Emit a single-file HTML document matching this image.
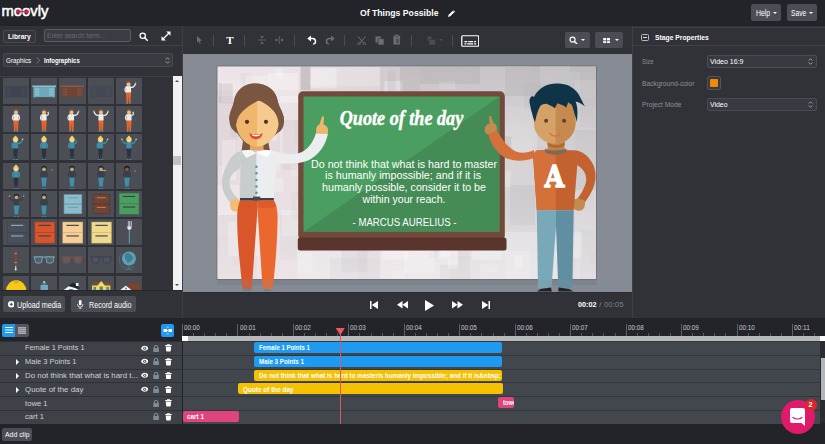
<!DOCTYPE html>
<html><head><meta charset="utf-8"><title>Moovly</title>
<style>
*{box-sizing:border-box;margin:0;padding:0}
html,body{width:825px;height:444px;overflow:hidden;background:#303238;font-family:"Liberation Sans",sans-serif;color:#fff}
.abs{position:absolute}
.t{position:absolute;white-space:nowrap;transform-origin:0 50%;line-height:1.2;display:block}
#top{left:0;top:0;width:825px;height:26px;background:#22242a}
#left{left:0;top:26px;width:183px;height:293px;background:#303238;border-right:1px solid #3d4046;overflow:hidden}
#toolbar{left:183px;top:26px;width:449px;height:28px;background:#303238}
#stagebg{left:183px;top:54px;width:449px;height:238px;background:#868b94;overflow:hidden}
#play{left:183px;top:292px;width:449px;height:27px;background:#303238}
#right{left:631.500px;top:26px;width:194px;height:293px;background:#303238;border-left:1px solid #3d4046}
#tl{left:0;top:318px;width:825px;height:126px;background:#22242a;overflow:hidden}
.row{left:0;width:182px;background:#3e4148;border-top:1px solid #2f3137}
.trk{left:183px;width:637px;background:#42464d;border-top:1px solid #34373d}
.clip{height:11px;border-radius:2px;overflow:hidden}
.sep{width:1px;height:11px;top:8.500px;background:#4a4d55}
.th{width:26px;height:26px;background:#4a4d54;overflow:hidden}
.btn{background:#4a4d54;border-radius:2px}
</style></head><body>
<div id="top" class="abs">
<svg class="abs" style="left:0;top:0" width="60" height="26" viewBox="0 0 60 26"><text x="1.500" y="15.600" font-family="'Liberation Sans',sans-serif" font-weight="normal" font-size="15.500" fill="#fff" stroke="#fff" stroke-width=".55" textLength="47" lengthAdjust="spacingAndGlyphs">moovly</text><path d="M18.800 11.600H27" stroke="#e6176a" stroke-width="1.300"/><circle cx="18.800" cy="11.600" r="1.900" fill="#e6176a"/><circle cx="27" cy="11.600" r="1.900" fill="#e6176a"/></svg>
<span class="t" style="left:360.00px;top:6.60px;font-size:9.50px;font-weight:bold;color:#fff;transform:scaleX(0.912);">Of Things Possible</span><svg class="abs" style="left:448px;top:9.800px" width="7" height="7" viewBox="0 0 16 16"><path d="M0 16l1.500-5L11 1.500l3.500 3.500L5 14.500z" fill="#fff"/><path d="M12 0.500l1-1 3.500 3.500-1 1z" fill="#fff" transform="translate(0 1)"/></svg>
<div class="abs btn" style="left:751.300px;top:4.200px;width:29.700px;height:16.600px;background:#4b4e56"></div><span class="t" style="left:755.80px;top:7.90px;font-size:8.50px;font-weight:normal;color:#fff;transform:scaleX(0.812);">Help</span><div class="abs" style="left:772.8px;top:11.8px;width:0;height:0;border-left:2px solid transparent;border-right:2px solid transparent;border-top:2.400px solid #fff"></div><div class="abs btn" style="left:786.800px;top:4.200px;width:30.300px;height:16.600px;background:#4b4e56"></div><span class="t" style="left:791.30px;top:7.90px;font-size:8.50px;font-weight:normal;color:#fff;transform:scaleX(0.785);">Save</span><div class="abs" style="left:809.3px;top:11.8px;width:0;height:0;border-left:2px solid transparent;border-right:2px solid transparent;border-top:2.400px solid #fff"></div></div>
<div id="left" class="abs">
<div class="abs" style="left:0;top:18.500px;width:182px;height:1px;background:#3d4046"></div><div class="abs" style="left:3.300px;top:3.600px;width:32.500px;height:13.500px;background:#34363c;border:1px solid #474a51;border-radius:2px"></div><span class="t" style="left:7.80px;top:5.60px;font-size:8.00px;font-weight:bold;color:#fff;transform:scaleX(0.837);">Library</span><div class="abs" style="left:44px;top:3px;width:86.500px;height:13px;background:#3a3c43;border:1px solid #5a5d65;border-radius:2px"></div><span class="t" style="left:46.80px;top:4.80px;font-size:8.00px;font-weight:normal;color:#696c74;transform:scaleX(0.826);">Enter search term...</span><svg class="abs" style="left:138.500px;top:6.300px" width="9" height="9" viewBox="0 0 18 18"><circle cx="7.500" cy="7.500" r="5.300" fill="none" stroke="#fff" stroke-width="2.600"/><path d="M11.500 11.500L16.500 16.500" stroke="#fff" stroke-width="3" stroke-linecap="round"/></svg><svg class="abs" style="left:160.500px;top:4.500px" width="10" height="10" viewBox="0 0 20 20"><path d="M4 16L16 4" stroke="#fff" stroke-width="2.400"/><path d="M10.500 1H19V9.500z" fill="#fff"/><path d="M9.500 19H1V10.500z" fill="#fff"/></svg><div class="abs" style="left:2.700px;top:27px;width:170.800px;height:13.500px;background:#393b42;border:1px solid #484b52;border-radius:2px"></div><span class="t" style="left:5.60px;top:29.60px;font-size:7.80px;font-weight:normal;color:#fff;transform:scaleX(0.808);">Graphics</span><svg class="abs" style="left:35.500px;top:30.500px" width="5" height="7" viewBox="0 0 5 7"><path d="M0.500 0.500L4 3.500L0.500 6.500" fill="none" stroke="#7a7d85" stroke-width=".8"/></svg><span class="t" style="left:43.50px;top:29.60px;font-size:7.80px;font-weight:bold;color:#fff;transform:scaleX(0.763);">Infographics</span><svg class="abs" style="left:164.500px;top:30.800px" width="5" height="7" viewBox="0 0 10 14"><path d="M1.500 5L5 1.500L8.500 5M1.500 9L5 12.500L8.500 9" fill="none" stroke="#b9bbc0" stroke-width="1.600"/></svg><div class="abs" style="left:0;top:49.500px;width:182px;height:1px;background:#3d4046"></div><div class="abs" style="left:0;top:50.500px;width:182px;height:213.700px;overflow:hidden"><svg class="abs" style="left:2.70px;top:1.30px;background:#4b4e55" width="26.400" height="26" viewBox="0 0 26.400 26"><rect x="1.300" y="7.500" width="23.800" height="1.600" fill="#434854"/><rect x="2.300" y="9.100" width="21.800" height="10" fill="#3f444f"/><rect x="3.800" y="10.600" width="4.500" height="1.800" fill="#454a56"/><rect x="3.800" y="13.200" width="4.500" height="1.800" fill="#454a56"/><rect x="3.800" y="15.800" width="4.500" height="1.800" fill="#454a56"/><rect x="18.100" y="10.600" width="4.500" height="1.800" fill="#454a56"/><rect x="18.100" y="13.200" width="4.500" height="1.800" fill="#454a56"/><rect x="18.100" y="15.800" width="4.500" height="1.800" fill="#454a56"/><rect x="3" y="18.600" width="1" height="1.200" fill="#3f444f"/><rect x="22.400" y="18.600" width="1" height="1.200" fill="#3f444f"/></svg>
<svg class="abs" style="left:31.05px;top:1.30px;background:#4b4e55" width="26.400" height="26" viewBox="0 0 26.400 26"><rect x="1.300" y="7.500" width="23.800" height="1.600" fill="#8cc3d3"/><rect x="2.300" y="9.100" width="21.800" height="10" fill="#6ea9bb"/><rect x="3.800" y="10.600" width="4.500" height="1.800" fill="#8cc3d3"/><rect x="3.800" y="13.200" width="4.500" height="1.800" fill="#8cc3d3"/><rect x="3.800" y="15.800" width="4.500" height="1.800" fill="#8cc3d3"/><rect x="18.100" y="10.600" width="4.500" height="1.800" fill="#8cc3d3"/><rect x="18.100" y="13.200" width="4.500" height="1.800" fill="#8cc3d3"/><rect x="18.100" y="15.800" width="4.500" height="1.800" fill="#8cc3d3"/><rect x="3" y="18.600" width="1" height="1.200" fill="#6ea9bb"/><rect x="22.400" y="18.600" width="1" height="1.200" fill="#6ea9bb"/></svg>
<svg class="abs" style="left:59.40px;top:1.30px;background:#4b4e55" width="26.400" height="26" viewBox="0 0 26.400 26"><rect x="1.300" y="7.500" width="23.800" height="1.600" fill="#8a5a46"/><rect x="2.300" y="9.100" width="21.800" height="10" fill="#6e4436"/><rect x="3.800" y="10.600" width="4.500" height="1.800" fill="#80503f"/><rect x="3.800" y="13.200" width="4.500" height="1.800" fill="#80503f"/><rect x="3.800" y="15.800" width="4.500" height="1.800" fill="#80503f"/><rect x="18.100" y="10.600" width="4.500" height="1.800" fill="#80503f"/><rect x="18.100" y="13.200" width="4.500" height="1.800" fill="#80503f"/><rect x="18.100" y="15.800" width="4.500" height="1.800" fill="#80503f"/><rect x="3" y="18.600" width="1" height="1.200" fill="#6e4436"/><rect x="22.400" y="18.600" width="1" height="1.200" fill="#6e4436"/></svg>
<svg class="abs" style="left:87.75px;top:1.30px;background:#4b4e55" width="26.400" height="26" viewBox="0 0 26.400 26"><rect x="1.300" y="7.500" width="23.800" height="1.600" fill="#474c57"/><rect x="2.300" y="9.100" width="21.800" height="10" fill="#434852"/><rect x="3.800" y="10.600" width="4.500" height="1.800" fill="#494e59"/><rect x="3.800" y="13.200" width="4.500" height="1.800" fill="#494e59"/><rect x="3.800" y="15.800" width="4.500" height="1.800" fill="#494e59"/><rect x="18.100" y="10.600" width="4.500" height="1.800" fill="#494e59"/><rect x="18.100" y="13.200" width="4.500" height="1.800" fill="#494e59"/><rect x="18.100" y="15.800" width="4.500" height="1.800" fill="#494e59"/><rect x="3" y="18.600" width="1" height="1.200" fill="#434852"/><rect x="22.400" y="18.600" width="1" height="1.200" fill="#434852"/></svg>
<svg class="abs" style="left:116.10px;top:1.30px;background:#4b4e55" width="26.400" height="26" viewBox="0 0 26.400 26"><path d="M9.9 14.1h5.200l-.6 11h-1.600l-.4-8-.4 8h-1.600z" fill="#e9652d"/><rect x="10.2" y="25.1" width="1.800" height=".9" fill="#3b8ea5"/><rect x="13.0" y="25.1" width="1.800" height=".9" fill="#3b8ea5"/><rect x="9.9" y="8.1" width="5.200" height="6.300" rx="1" fill="#e9ebec"/><path d="M10.1 8.8q-2.2 3 0 5.500" stroke="#e9ebec" stroke-width="1.200" fill="none"/><path d="M14.9 9.3q3.0 1 4.6 -3.500" stroke="#e9ebec" stroke-width="1.200" fill="none"/><circle cx="19.6" cy="5.2" r=".8" fill="#f4c07e"/><circle cx="12.5" cy="5.5" r="2.700" fill="#7a5540"/><circle cx="12.5" cy="6.3" r="1.900" fill="#f4c07e"/></svg>
<svg class="abs" style="left:2.70px;top:29.58px;background:#4b4e55" width="26.400" height="26" viewBox="0 0 26.400 26"><path d="M10.4 14.1h5.200l-.6 11h-1.600l-.4-8-.4 8h-1.600z" fill="#e9652d"/><rect x="10.7" y="25.1" width="1.800" height=".9" fill="#3b8ea5"/><rect x="13.5" y="25.1" width="1.800" height=".9" fill="#3b8ea5"/><rect x="10.4" y="8.1" width="5.200" height="6.300" rx="1" fill="#e9ebec"/><path d="M10.6 8.8q-2.2 3 0 5.500" stroke="#e9ebec" stroke-width="1.200" fill="none"/><path d="M15.4 8.8q2.2 3 0 5.500" stroke="#e9ebec" stroke-width="1.200" fill="none"/><circle cx="13.0" cy="5.5" r="2.700" fill="#7a5540"/><circle cx="13.0" cy="6.3" r="1.900" fill="#f4c07e"/></svg>
<svg class="abs" style="left:31.05px;top:29.58px;background:#4b4e55" width="26.400" height="26" viewBox="0 0 26.400 26"><path d="M10.4 14.1h5.200l-.6 11h-1.600l-.4-8-.4 8h-1.600z" fill="#e9652d"/><rect x="10.7" y="25.1" width="1.800" height=".9" fill="#3b8ea5"/><rect x="13.5" y="25.1" width="1.800" height=".9" fill="#3b8ea5"/><rect x="10.4" y="8.1" width="5.200" height="6.300" rx="1" fill="#e9ebec"/><path d="M10.6 8.8q-2.2 3 0 5.500" stroke="#e9ebec" stroke-width="1.200" fill="none"/><path d="M15.4 9.3q3 0 1.500 -3.500" stroke="#e9ebec" stroke-width="1.200" fill="none"/><circle cx="13.0" cy="5.5" r="2.700" fill="#7a5540"/><circle cx="13.0" cy="6.3" r="1.900" fill="#f4c07e"/></svg>
<svg class="abs" style="left:59.40px;top:29.58px;background:#4b4e55" width="26.400" height="26" viewBox="0 0 26.400 26"><path d="M9.9 14.1h5.200l-.6 11h-1.600l-.4-8-.4 8h-1.600z" fill="#e9652d"/><rect x="10.2" y="25.1" width="1.800" height=".9" fill="#3b8ea5"/><rect x="13.0" y="25.1" width="1.800" height=".9" fill="#3b8ea5"/><rect x="9.9" y="8.1" width="5.200" height="6.300" rx="1" fill="#e9ebec"/><path d="M10.1 8.8q-2.2 3 0 5.500" stroke="#e9ebec" stroke-width="1.200" fill="none"/><path d="M14.9 9.3q3.0 1 4.6 -3.500" stroke="#e9ebec" stroke-width="1.200" fill="none"/><circle cx="19.6" cy="5.2" r=".8" fill="#f4c07e"/><circle cx="12.5" cy="5.5" r="2.700" fill="#7a5540"/><circle cx="12.5" cy="6.3" r="1.900" fill="#f4c07e"/></svg>
<svg class="abs" style="left:87.75px;top:29.58px;background:#4b4e55" width="26.400" height="26" viewBox="0 0 26.400 26"><path d="M10.4 14.1h5.200l-.6 11h-1.600l-.4-8-.4 8h-1.600z" fill="#e9652d"/><rect x="10.7" y="25.1" width="1.800" height=".9" fill="#3b8ea5"/><rect x="13.5" y="25.1" width="1.800" height=".9" fill="#3b8ea5"/><rect x="10.4" y="8.1" width="5.200" height="6.300" rx="1" fill="#e9ebec"/><path d="M10.6 9.3q-3.0 1 -4.6 -3.500" stroke="#e9ebec" stroke-width="1.200" fill="none"/><circle cx="5.9" cy="5.2" r=".8" fill="#f4c07e"/><path d="M15.4 9.3q3.0 1 4.6 -3.500" stroke="#e9ebec" stroke-width="1.200" fill="none"/><circle cx="20.1" cy="5.2" r=".8" fill="#f4c07e"/><circle cx="13.0" cy="5.5" r="2.700" fill="#7a5540"/><circle cx="13.0" cy="6.3" r="1.900" fill="#f4c07e"/></svg>
<svg class="abs" style="left:116.10px;top:29.58px;background:#4b4e55" width="26.400" height="26" viewBox="0 0 26.400 26"><path d="M10.4 14.1h5.200l-.6 11h-1.600l-.4-8-.4 8h-1.600z" fill="#e9652d"/><rect x="10.7" y="25.1" width="1.800" height=".9" fill="#3b8ea5"/><rect x="13.5" y="25.1" width="1.800" height=".9" fill="#3b8ea5"/><rect x="10.4" y="8.1" width="5.200" height="6.300" rx="1" fill="#e9ebec"/><path d="M10.6 8.8q-2.2 3 0 5.500" stroke="#e9ebec" stroke-width="1.200" fill="none"/><path d="M15.4 9.3q3 0 1.500 -3.500" stroke="#e9ebec" stroke-width="1.200" fill="none"/><circle cx="13.0" cy="5.5" r="2.700" fill="#7a5540"/><circle cx="13.0" cy="6.3" r="1.900" fill="#f4c07e"/></svg>
<svg class="abs" style="left:2.70px;top:57.86px;background:#4b4e55" width="26.400" height="26" viewBox="0 0 26.400 26"><path d="M10.1 14.1h4.800l-.7 8.500h-3.400z" fill="#2c3340"/><rect x="11.0" y="21.3" width="1.100" height="3.500" fill="#2c3340"/><rect x="12.9" y="21.3" width="1.100" height="3.500" fill="#2c3340"/><rect x="10.2" y="25.1" width="1.800" height=".9" fill="#3b8ea5"/><rect x="13.0" y="25.1" width="1.800" height=".9" fill="#3b8ea5"/><rect x="9.9" y="8.1" width="5.200" height="6.300" rx="1" fill="#3f8fa8"/><path d="M10.1 8.8q-2.2 3 0 5.500" stroke="#3f8fa8" stroke-width="1.200" fill="none"/><path d="M14.9 9.3q3.0 1 4.6 -3.500" stroke="#3f8fa8" stroke-width="1.200" fill="none"/><circle cx="19.6" cy="5.2" r=".8" fill="#f2d3a8"/><circle cx="12.5" cy="5.5" r="2.700" fill="#f2d24b"/><circle cx="12.5" cy="6.3" r="1.900" fill="#f2d3a8"/><circle cx="12.5" cy="2.8" r="1.100" fill="#f2d24b"/></svg>
<svg class="abs" style="left:31.05px;top:57.86px;background:#4b4e55" width="26.400" height="26" viewBox="0 0 26.400 26"><path d="M10.6 14.1h4.800l-.7 8.500h-3.400z" fill="#2c3340"/><rect x="11.5" y="21.3" width="1.100" height="3.500" fill="#2c3340"/><rect x="13.4" y="21.3" width="1.100" height="3.500" fill="#2c3340"/><rect x="10.7" y="25.1" width="1.800" height=".9" fill="#3b8ea5"/><rect x="13.5" y="25.1" width="1.800" height=".9" fill="#3b8ea5"/><rect x="10.4" y="8.1" width="5.200" height="6.300" rx="1" fill="#3f8fa8"/><path d="M10.6 8.8q-2.2 3 0 5.500" stroke="#3f8fa8" stroke-width="1.200" fill="none"/><path d="M15.4 8.8q2.2 3 0 5.500" stroke="#3f8fa8" stroke-width="1.200" fill="none"/><circle cx="13.0" cy="5.5" r="2.700" fill="#f2d24b"/><circle cx="13.0" cy="6.3" r="1.900" fill="#f2d3a8"/><circle cx="13.0" cy="2.8" r="1.100" fill="#f2d24b"/></svg>
<svg class="abs" style="left:59.40px;top:57.86px;background:#4b4e55" width="26.400" height="26" viewBox="0 0 26.400 26"><path d="M10.6 14.1h4.800l-.7 8.500h-3.400z" fill="#2c3340"/><rect x="11.5" y="21.3" width="1.100" height="3.500" fill="#2c3340"/><rect x="13.4" y="21.3" width="1.100" height="3.500" fill="#2c3340"/><rect x="10.7" y="25.1" width="1.800" height=".9" fill="#3b8ea5"/><rect x="13.5" y="25.1" width="1.800" height=".9" fill="#3b8ea5"/><rect x="10.4" y="8.1" width="5.200" height="6.300" rx="1" fill="#3f8fa8"/><path d="M10.6 8.8q-2.2 3 0 5.500" stroke="#3f8fa8" stroke-width="1.200" fill="none"/><path d="M15.4 9.3q3 0 1.500 -3.500" stroke="#3f8fa8" stroke-width="1.200" fill="none"/><circle cx="13.0" cy="5.5" r="2.700" fill="#f2d24b"/><circle cx="13.0" cy="6.3" r="1.900" fill="#f2d3a8"/><circle cx="13.0" cy="2.8" r="1.100" fill="#f2d24b"/></svg>
<svg class="abs" style="left:87.75px;top:57.86px;background:#4b4e55" width="26.400" height="26" viewBox="0 0 26.400 26"><path d="M10.1 14.1h4.800l-.7 8.500h-3.400z" fill="#2c3340"/><rect x="11.0" y="21.3" width="1.100" height="3.500" fill="#2c3340"/><rect x="12.9" y="21.3" width="1.100" height="3.500" fill="#2c3340"/><rect x="10.2" y="25.1" width="1.800" height=".9" fill="#3b8ea5"/><rect x="13.0" y="25.1" width="1.800" height=".9" fill="#3b8ea5"/><rect x="9.9" y="8.1" width="5.200" height="6.300" rx="1" fill="#3f8fa8"/><path d="M10.1 8.8q-2.2 3 0 5.500" stroke="#3f8fa8" stroke-width="1.200" fill="none"/><path d="M14.9 9.3q3.0 1 4.6 -3.500" stroke="#3f8fa8" stroke-width="1.200" fill="none"/><circle cx="19.6" cy="5.2" r=".8" fill="#f2d3a8"/><circle cx="12.5" cy="5.5" r="2.700" fill="#f2d24b"/><circle cx="12.5" cy="6.3" r="1.900" fill="#f2d3a8"/><circle cx="12.5" cy="2.8" r="1.100" fill="#f2d24b"/></svg>
<svg class="abs" style="left:116.10px;top:57.86px;background:#4b4e55" width="26.400" height="26" viewBox="0 0 26.400 26"><path d="M10.6 14.1h4.800l-.7 8.500h-3.400z" fill="#2c3340"/><rect x="11.5" y="21.3" width="1.100" height="3.500" fill="#2c3340"/><rect x="13.4" y="21.3" width="1.100" height="3.500" fill="#2c3340"/><rect x="10.7" y="25.1" width="1.800" height=".9" fill="#3b8ea5"/><rect x="13.5" y="25.1" width="1.800" height=".9" fill="#3b8ea5"/><rect x="10.4" y="8.1" width="5.200" height="6.300" rx="1" fill="#3f8fa8"/><path d="M10.6 9.3q-3.0 1 -4.6 -3.500" stroke="#3f8fa8" stroke-width="1.200" fill="none"/><circle cx="5.9" cy="5.2" r=".8" fill="#f2d3a8"/><path d="M15.4 9.3q3.0 1 4.6 -3.500" stroke="#3f8fa8" stroke-width="1.200" fill="none"/><circle cx="20.1" cy="5.2" r=".8" fill="#f2d3a8"/><circle cx="13.0" cy="5.5" r="2.700" fill="#f2d24b"/><circle cx="13.0" cy="6.3" r="1.900" fill="#f2d3a8"/><circle cx="13.0" cy="2.8" r="1.100" fill="#f2d24b"/></svg>
<svg class="abs" style="left:2.70px;top:86.14px;background:#4b4e55" width="26.400" height="26" viewBox="0 0 26.400 26"><path d="M10.6 14.1h4.800l-.7 8.500h-3.400z" fill="#2c3340"/><rect x="11.5" y="21.3" width="1.100" height="3.500" fill="#2c3340"/><rect x="13.4" y="21.3" width="1.100" height="3.500" fill="#2c3340"/><rect x="10.7" y="25.1" width="1.800" height=".9" fill="#3b8ea5"/><rect x="13.5" y="25.1" width="1.800" height=".9" fill="#3b8ea5"/><rect x="10.4" y="8.1" width="5.200" height="6.300" rx="1" fill="#3f8fa8"/><path d="M10.6 8.8q-2.2 3 0 5.500" stroke="#3f8fa8" stroke-width="1.200" fill="none"/><path d="M15.4 8.8q2.2 3 0 5.500" stroke="#3f8fa8" stroke-width="1.200" fill="none"/><circle cx="13.0" cy="5.5" r="2.700" fill="#f2d24b"/><circle cx="13.0" cy="6.3" r="1.900" fill="#f2d3a8"/><circle cx="13.0" cy="2.8" r="1.100" fill="#f2d24b"/></svg>
<svg class="abs" style="left:31.05px;top:86.14px;background:#4b4e55" width="26.400" height="26" viewBox="0 0 26.400 26"><path d="M10.2 14.1h5.600l-1.100 9.500h-3.400z" fill="#3f8fa8"/><rect x="10.7" y="25.1" width="1.800" height=".9" fill="#3b8ea5"/><rect x="13.5" y="25.1" width="1.800" height=".9" fill="#3b8ea5"/><rect x="10.4" y="8.1" width="5.200" height="6.300" rx="1" fill="#3a3f4c"/><path d="M10.6 8.8q-2.2 3 0 5.500" stroke="#3a3f4c" stroke-width="1.200" fill="none"/><path d="M15.4 8.8q2.2 3 0 5.500" stroke="#3a3f4c" stroke-width="1.200" fill="none"/><circle cx="13.0" cy="5.5" r="2.700" fill="#12303f"/><circle cx="13.0" cy="6.3" r="1.900" fill="#d9a066"/><circle cx="21" cy="7" r=".8" fill="#c98a55"/></svg>
<svg class="abs" style="left:59.40px;top:86.14px;background:#4b4e55" width="26.400" height="26" viewBox="0 0 26.400 26"><path d="M10.2 14.1h5.600l-1.100 9.500h-3.400z" fill="#3f8fa8"/><rect x="10.7" y="25.1" width="1.800" height=".9" fill="#3b8ea5"/><rect x="13.5" y="25.1" width="1.800" height=".9" fill="#3b8ea5"/><rect x="10.4" y="8.1" width="5.200" height="6.300" rx="1" fill="#3a3f4c"/><path d="M10.6 8.8q-2.2 3 0 5.500" stroke="#3a3f4c" stroke-width="1.200" fill="none"/><path d="M15.4 8.8q2.2 3 0 5.500" stroke="#3a3f4c" stroke-width="1.200" fill="none"/><circle cx="13.0" cy="5.5" r="2.700" fill="#12303f"/><circle cx="13.0" cy="6.3" r="1.900" fill="#d9a066"/></svg>
<svg class="abs" style="left:87.75px;top:86.14px;background:#4b4e55" width="26.400" height="26" viewBox="0 0 26.400 26"><path d="M10.2 14.1h5.600l-1.100 9.500h-3.400z" fill="#3f8fa8"/><rect x="10.7" y="25.1" width="1.800" height=".9" fill="#3b8ea5"/><rect x="13.5" y="25.1" width="1.800" height=".9" fill="#3b8ea5"/><rect x="10.4" y="8.1" width="5.200" height="6.300" rx="1" fill="#3a3f4c"/><path d="M10.6 8.8q-2.2 3 0 5.500" stroke="#3a3f4c" stroke-width="1.200" fill="none"/><path d="M15.4 8.8q2.2 3 0 5.500" stroke="#3a3f4c" stroke-width="1.200" fill="none"/><circle cx="13.0" cy="5.5" r="2.700" fill="#12303f"/><circle cx="13.0" cy="6.3" r="1.900" fill="#d9a066"/><path d="M14 7.500h4" stroke="#d9a066" stroke-width="1"/></svg>
<svg class="abs" style="left:116.10px;top:86.14px;background:#4b4e55" width="26.400" height="26" viewBox="0 0 26.400 26"><path d="M8.2 14.1h5.600l-1.100 9.500h-3.400z" fill="#3f8fa8"/><rect x="8.7" y="25.1" width="1.800" height=".9" fill="#3b8ea5"/><rect x="11.5" y="25.1" width="1.800" height=".9" fill="#3b8ea5"/><rect x="8.4" y="8.1" width="5.200" height="6.300" rx="1" fill="#3a3f4c"/><path d="M8.6 8.8q-2.2 3 0 5.500" stroke="#3a3f4c" stroke-width="1.200" fill="none"/><path d="M13.4 8.8q2.2 3 0 5.500" stroke="#3a3f4c" stroke-width="1.200" fill="none"/><circle cx="11.0" cy="5.5" r="2.700" fill="#1c1a1c"/><circle cx="11.0" cy="6.3" r="1.900" fill="#8a5a3c"/><circle cx="19" cy="8" r=".8" fill="#c98a55"/></svg>
<svg class="abs" style="left:2.70px;top:114.42px;background:#4b4e55" width="26.400" height="26" viewBox="0 0 26.400 26"><path d="M10.7 14.1h5.600l-1.100 9.500h-3.400z" fill="#3f8fa8"/><rect x="11.2" y="25.1" width="1.800" height=".9" fill="#3b8ea5"/><rect x="14.0" y="25.1" width="1.800" height=".9" fill="#3b8ea5"/><rect x="10.9" y="8.1" width="5.200" height="6.300" rx="1" fill="#3a3f4c"/><path d="M11.1 9.3q-3.0 1 -4.6 -3.500" stroke="#3a3f4c" stroke-width="1.200" fill="none"/><circle cx="6.4" cy="5.2" r=".8" fill="#d9a066"/><path d="M15.9 9.3q3.0 1 4.6 -3.500" stroke="#3a3f4c" stroke-width="1.200" fill="none"/><circle cx="20.6" cy="5.2" r=".8" fill="#d9a066"/><circle cx="13.5" cy="5.5" r="2.700" fill="#12303f"/><circle cx="13.5" cy="6.3" r="1.900" fill="#d9a066"/></svg>
<svg class="abs" style="left:31.05px;top:114.42px;background:#4b4e55" width="26.400" height="26" viewBox="0 0 26.400 26"><path d="M10.2 14.1h5.600l-1.100 9.500h-3.400z" fill="#3f8fa8"/><rect x="10.7" y="25.1" width="1.800" height=".9" fill="#3b8ea5"/><rect x="13.5" y="25.1" width="1.800" height=".9" fill="#3b8ea5"/><rect x="10.4" y="8.1" width="5.200" height="6.300" rx="1" fill="#3a3f4c"/><path d="M10.6 8.8q-2.2 3 0 5.500" stroke="#3a3f4c" stroke-width="1.200" fill="none"/><path d="M15.4 8.8q2.2 3 0 5.500" stroke="#3a3f4c" stroke-width="1.200" fill="none"/><circle cx="13.0" cy="5.5" r="2.700" fill="#12303f"/><circle cx="13.0" cy="6.3" r="1.900" fill="#d9a066"/></svg>
<svg class="abs" style="left:59.40px;top:114.42px;background:#4b4e55" width="26.400" height="26" viewBox="0 0 26.400 26"><rect x="4.7" y="3.2" width="18.4" height="19.8" fill="#5f92a4"/><rect x="5.3" y="3.8" width="17.2" height="8.9" fill="#8dbccb"/><rect x="5.3" y="13.5" width="17.2" height="8.9" fill="#8dbccb"/><rect x="8.7" y="6.2" width="10.4" height="1.100" fill="#6fa3b5"/><rect x="8.7" y="15.9" width="10.4" height="1.100" fill="#6fa3b5"/></svg>
<svg class="abs" style="left:87.75px;top:114.42px;background:#4b4e55" width="26.400" height="26" viewBox="0 0 26.400 26"><rect x="4.8" y="3.2" width="17.0" height="19.8" fill="#55332a"/><rect x="5.4" y="3.8" width="15.8" height="8.9" fill="#6e4436"/><rect x="5.4" y="13.5" width="15.8" height="8.9" fill="#6e4436"/><rect x="8.8" y="6.2" width="9.0" height="1.100" fill="#e0702e"/><rect x="8.8" y="15.9" width="9.0" height="1.100" fill="#e0702e"/></svg>
<svg class="abs" style="left:116.10px;top:114.42px;background:#4b4e55" width="26.400" height="26" viewBox="0 0 26.400 26"><rect x="3.0" y="1.9" width="20.2" height="21.6" fill="#3a7f4c"/><rect x="3.6" y="2.5" width="19.0" height="9.8" fill="#4a9e5f"/><rect x="3.6" y="13.1" width="19.0" height="9.8" fill="#4a9e5f"/><rect x="7.0" y="4.9" width="12.2" height="1.100" fill="#3a3f4c"/><rect x="7.0" y="15.5" width="12.2" height="1.100" fill="#3a3f4c"/></svg>
<svg class="abs" style="left:2.70px;top:142.70px;background:#4b4e55" width="26.400" height="26" viewBox="0 0 26.400 26"><rect x="4.0" y="2.8" width="20.3" height="21.6" fill="#3c414c"/><rect x="4.6" y="3.4" width="19.1" height="9.8" fill="#4a4f5b"/><rect x="4.6" y="14.0" width="19.1" height="9.8" fill="#4a4f5b"/><rect x="8.0" y="5.8" width="12.3" height="1.100" fill="#7fb6c6"/><rect x="8.0" y="16.4" width="12.3" height="1.100" fill="#7fb6c6"/></svg>
<svg class="abs" style="left:31.05px;top:142.70px;background:#4b4e55" width="26.400" height="26" viewBox="0 0 26.400 26"><rect x="3.6" y="2.8" width="20.3" height="21.6" fill="#b64220"/><rect x="4.2" y="3.4" width="19.1" height="9.8" fill="#d9552b"/><rect x="4.2" y="14.0" width="19.1" height="9.8" fill="#d9552b"/><rect x="7.6" y="5.8" width="12.3" height="1.100" fill="#3a3f4c"/><rect x="7.6" y="16.4" width="12.3" height="1.100" fill="#3a3f4c"/></svg>
<svg class="abs" style="left:59.40px;top:142.70px;background:#4b4e55" width="26.400" height="26" viewBox="0 0 26.400 26"><rect x="3.4" y="2.8" width="20.5" height="21.6" fill="#dcae6e"/><rect x="4.0" y="3.4" width="19.3" height="9.8" fill="#f5cf96"/><rect x="4.0" y="14.0" width="19.3" height="9.8" fill="#f5cf96"/><rect x="7.4" y="5.8" width="12.5" height="1.100" fill="#3a3f4c"/><rect x="7.4" y="16.4" width="12.5" height="1.100" fill="#3a3f4c"/></svg>
<svg class="abs" style="left:87.75px;top:142.70px;background:#4b4e55" width="26.400" height="26" viewBox="0 0 26.400 26"><rect x="3.4" y="2.8" width="20.3" height="21.6" fill="#d2b868"/><rect x="4.0" y="3.4" width="19.1" height="9.8" fill="#efd98f"/><rect x="4.0" y="14.0" width="19.1" height="9.8" fill="#efd98f"/><rect x="7.4" y="5.8" width="12.3" height="1.100" fill="#3a3f4c"/><rect x="7.4" y="16.4" width="12.3" height="1.100" fill="#3a3f4c"/></svg>
<svg class="abs" style="left:116.10px;top:142.70px;background:#4b4e55" width="26.400" height="26" viewBox="0 0 26.400 26"><path d="M11.200 2v6q0 2.500 1.700 3h1q1.700-.5 1.700-3V2h-.7v5.500h-.7V2h-.8v5.500h-.8V2h-.7v5.500h-.7V2z" fill="#e6e8ea"/><rect x="12.800" y="10.500" width="1.100" height="14" fill="#5f9fb3"/></svg>
<svg class="abs" style="left:2.70px;top:170.98px;background:#4b4e55" width="26.400" height="26" viewBox="0 0 26.400 26"><rect x="11.500" y="4" width="2.400" height="15" fill="#7a4a36"/><rect x="11.500" y="6" width="2.400" height=".8" fill="#c9a080"/><rect x="11.500" y="15" width="2.400" height=".8" fill="#c9a080"/><rect x="12.100" y="19" width="1.200" height="3" fill="#ccc"/><circle cx="12.700" cy="22.500" r="1" fill="#eee"/></svg>
<svg class="abs" style="left:31.05px;top:170.98px;background:#4b4e55" width="26.400" height="26" viewBox="0 0 26.400 26"><path d="M2.500 10h21.400" stroke="#6ba6b9" stroke-width="1.200"/><path d="M3.500 10h8l-1 5.500q-3 1.500-6 0z" fill="#5a5e66" stroke="#6ba6b9" stroke-width="1"/><path d="M14.900 10h8l-1 5.500q-3 1.500-6 0z" fill="#5a5e66" stroke="#6ba6b9" stroke-width="1"/></svg>
<svg class="abs" style="left:59.40px;top:170.98px;background:#4b4e55" width="26.400" height="26" viewBox="0 0 26.400 26"><path d="M2.500 10h21.400" stroke="#8a4a36" stroke-width="1.200"/><path d="M3.500 10h8l-1 5.500q-3 1.500-6 0z" fill="#5a5e66" stroke="#8a4a36" stroke-width="1"/><path d="M14.900 10h8l-1 5.500q-3 1.500-6 0z" fill="#5a5e66" stroke="#8a4a36" stroke-width="1"/></svg>
<svg class="abs" style="left:87.75px;top:170.98px;background:#4b4e55" width="26.400" height="26" viewBox="0 0 26.400 26"><path d="M2.500 10h21.400" stroke="#3a4252" stroke-width="1.200"/><path d="M3.500 10h8l-1 5.500q-3 1.500-6 0z" fill="#4f535b" stroke="#3a4252" stroke-width="1"/><path d="M14.900 10h8l-1 5.500q-3 1.500-6 0z" fill="#4f535b" stroke="#3a4252" stroke-width="1"/></svg>
<svg class="abs" style="left:116.10px;top:170.98px;background:#4b4e55" width="26.400" height="26" viewBox="0 0 26.400 26"><circle cx="13" cy="11.500" r="7" fill="#5f9fb3"/><path d="M9 7q3-2 5 0t3 3-2 4-4 1-2-4z" fill="#3f7f95"/><path d="M13 19v3M9.500 22.500h7" stroke="#4a6f80" stroke-width="1.200"/><path d="M6 6a8.500 8.500 0 0 0 12 13" fill="none" stroke="#4a6f80" stroke-width=".8"/></svg>
<svg class="abs" style="left:2.70px;top:199.26px;background:#4b4e55" width="26.400" height="26" viewBox="0 0 26.400 26"><g transform="translate(0 -11)"><path d="M3 26a10 10.500 0 0 1 20.400 0z" fill="#f6c917"/><path d="M11 15.500h4.500v3H11z" fill="#e0b30f"/></g></svg>
<svg class="abs" style="left:31.05px;top:199.26px;background:#4b4e55" width="26.400" height="26" viewBox="0 0 26.400 26"><g transform="translate(0 -11)"><rect x="9.500" y="20" width="7.500" height="6" fill="#6fa9bd"/><rect x="11" y="17.500" width="4.500" height="2.500" fill="#4a7f93"/><circle cx="13.200" cy="17" r="1" fill="#ddd"/></g></svg>
<svg class="abs" style="left:59.40px;top:199.26px;background:#4b4e55" width="26.400" height="26" viewBox="0 0 26.400 26"><g transform="translate(0 -11)"><path d="M4 25.500l8-6 8 6z" fill="#f2f3f4"/><path d="M9 21l5-3.500 7 6h-3z" fill="#1d2733"/><rect x="17" y="18" width="2.500" height="3" fill="#f2f3f4"/><path d="M10 24h4v1.500h-4z" fill="#3f8fa8"/></g></svg>
<svg class="abs" style="left:87.75px;top:199.26px;background:#4b4e55" width="26.400" height="26" viewBox="0 0 26.400 26"><g transform="translate(0 -11)"><path d="M3 20.500l2-3.500h16.400l2 3.500z" fill="#7a4a36"/><rect x="4" y="20.500" width="18.400" height="5.500" fill="#f2d24b"/><path d="M9.200 21l4-5 4 5v5h-8z" fill="#f6dc5e"/><rect x="11.500" y="21.500" width="3.400" height="4.500" fill="#3f8fa8"/><rect x="5.500" y="22" width="2.500" height="4" fill="#3f8fa8"/><rect x="18.400" y="22" width="2.500" height="4" fill="#3f8fa8"/></g></svg>
<svg class="abs" style="left:116.10px;top:199.26px;background:#4b4e55" width="26.400" height="26" viewBox="0 0 26.400 26"><g transform="translate(0 -11)"><path d="M3 26l7-5.500 7 5.500z" fill="#f2f3f4"/><path d="M10 20.500l4-2.500h9l2 8h-8z" fill="#7a4030"/><circle cx="10" cy="23.500" r="1" fill="#3f8fa8"/></g></svg>
</div><div class="abs" style="left:172.800px;top:50px;width:9.200px;height:214px;background:#f1f1f1"></div><div class="abs" style="left:173.300px;top:129.500px;width:8px;height:9px;background:#c1c1c1"></div><div class="abs" style="left:175.300px;top:54px;width:0;height:0;border-left:2px solid transparent;border-right:2px solid transparent;border-bottom:2.500px solid #505050"></div><div class="abs" style="left:175.300px;top:258px;width:0;height:0;border-left:2px solid transparent;border-right:2px solid transparent;border-top:2.500px solid #505050"></div><div class="abs" style="left:0;top:264.200px;width:182px;height:1px;background:#26282d"></div><div class="abs btn" style="left:2.700px;top:270.200px;width:62.300px;height:16.300px"></div><svg class="abs" style="left:7.600px;top:275.100px" width="6.600" height="6.600" viewBox="0 0 12 12"><circle cx="6" cy="6" r="6" fill="#fff"/><path d="M6 3v6M3 6h6" stroke="#4a4d54" stroke-width="1.800"/></svg><span class="t" style="left:16.70px;top:274.60px;font-size:8.30px;font-weight:normal;color:#fff;transform:scaleX(0.863);">Upload media</span><div class="abs btn" style="left:71px;top:270.200px;width:64.800px;height:16.300px"></div><svg class="abs" style="left:77.300px;top:273.700px" width="6.400" height="9.500" viewBox="0 0 12 18"><rect x="3.500" y="0" width="5" height="10" rx="2.500" fill="#fff"/><path d="M1 7.500v1a5 5 0 0 0 10 0v-1" fill="none" stroke="#fff" stroke-width="1.500"/><path d="M6 13.500v3M3 17h6" stroke="#fff" stroke-width="1.500"/></svg><span class="t" style="left:88.50px;top:274.60px;font-size:8.30px;font-weight:normal;color:#fff;transform:scaleX(0.861);">Record audio</span></div>
<div id="toolbar" class="abs">
<svg class="abs" style="left:13.500px;top:10px" width="5.500" height="8.500" viewBox="0 0 11 17"><path d="M0 0v13l3-2.800 2.300 5.500 2.300-1-2.300-5.300H10z" fill="#6b6e76"/></svg><div class="abs sep" style="left:30.3px"></div><svg class="abs" style="left:41.900px;top:8.700px" width="10" height="11" viewBox="0 0 10 11"><text x="5" y="9.400" text-anchor="middle" font-family="'Liberation Serif',serif" font-weight="bold" font-size="11" fill="#fff">T</text></svg><div class="abs sep" style="left:60.9px"></div><svg class="abs" style="left:74.800px;top:10px" width="8" height="8" viewBox="0 0 16 16"><path d="M0 8h16" stroke="#6b6e76" stroke-width="1.500"/><path d="M4.500 0.500h7L8 5.500zM4.500 15.500h7L8 10.500z" fill="#6b6e76"/></svg><svg class="abs" style="left:92px;top:10px" width="8.500" height="8" viewBox="0 0 17 16"><path d="M8.500 0v16" stroke="#6b6e76" stroke-width="1.500"/><path d="M1 4.500v7L6 8zM16 4.500v7L11 8z" fill="#6b6e76"/></svg><div class="abs sep" style="left:110.8px"></div><svg class="abs" style="left:123.700px;top:9px" width="10" height="10.500" viewBox="0 0 20 21"><path d="M7 7H11.500A5.600 5.600 0 0 1 13.500 17.800" fill="none" stroke="#fff" stroke-width="3" stroke-linecap="round"/><path d="M0.500 7L8 0.800V13.200z" fill="#fff"/></svg><svg class="abs" style="left:141.800px;top:9px" width="10" height="10.500" viewBox="0 0 20 21"><g transform="translate(20 0) scale(-1 1)"><path d="M7 7H11.500A5.600 5.600 0 0 1 13.500 17.800" fill="none" stroke="#6b6e76" stroke-width="3" stroke-linecap="round"/><path d="M0.500 7L8 0.800V13.200z" fill="#6b6e76"/></g></svg><div class="abs sep" style="left:160.5px"></div><svg class="abs" style="left:173.500px;top:9.500px" width="9.500" height="9.500" viewBox="0 0 19 19"><path d="M2 1L13 14M17 1L6 14" stroke="#6b6e76" stroke-width="2"/><circle cx="4" cy="15.500" r="2.500" fill="none" stroke="#6b6e76" stroke-width="1.600"/><circle cx="15" cy="15.500" r="2.500" fill="none" stroke="#6b6e76" stroke-width="1.600"/></svg><svg class="abs" style="left:192px;top:9.500px" width="9.500" height="9.500" viewBox="0 0 19 19"><rect x="1" y="1" width="11" height="12" fill="#6b6e76"/><rect x="6" y="5.500" width="12" height="12.500" fill="#6b6e76" stroke="#303238" stroke-width="1.200"/></svg><svg class="abs" style="left:210.200px;top:8.200px" width="7.500" height="10.800" viewBox="0 0 18 21" preserveAspectRatio="none"><rect x="1" y="3" width="16" height="17.500" rx="1.500" fill="#6b6e76"/><rect x="5.500" y="0.500" width="7" height="5" rx="1" fill="#6b6e76" stroke="#303238" stroke-width="1"/><rect x="7" y="9" width="8" height="9" fill="#4e5159"/></svg><div class="abs sep" style="left:228.2px"></div><svg class="abs" style="left:243.500px;top:9.500px" width="9" height="9.500" viewBox="0 0 18 19"><rect x="1" y="1" width="8" height="8" fill="#494c54"/><rect x="4" y="7" width="13" height="11" fill="#494c54" stroke="#303238" stroke-width="1"/></svg><div class="abs" style="left:255.5px;top:13.0px;width:0;height:0;border-left:2px solid transparent;border-right:2px solid transparent;border-top:2.400px solid #494c54"></div><div class="abs sep" style="left:269.3px"></div><svg class="abs" style="left:277.800px;top:8.700px" width="18.500" height="12" viewBox="0 0 19 13" preserveAspectRatio="none"><rect x="0.800" y="0.800" width="17.400" height="11.400" rx="1" fill="none" stroke="#fff" stroke-width="1.300"/><path d="M3.500 7.200h3M7.500 7.200h5M13.500 7.200h2" stroke="#fff" stroke-width="1.200"/><path d="M3.500 9.600h2M6.500 9.600h6M13.500 9.600h2" stroke="#fff" stroke-width="1.200"/></svg><div class="abs btn" style="left:381.700px;top:6.200px;width:25px;height:16.300px"></div><svg class="abs" style="left:386px;top:9.500px" width="8.500" height="8.500" viewBox="0 0 18 18"><circle cx="7.500" cy="7.500" r="5.300" fill="none" stroke="#fff" stroke-width="2.600"/><path d="M11.500 11.500L16.500 16.500" stroke="#fff" stroke-width="3" stroke-linecap="round"/></svg><div class="abs" style="left:397.5px;top:13.0px;width:0;height:0;border-left:2px solid transparent;border-right:2px solid transparent;border-top:2.400px solid #fff"></div><div class="abs btn" style="left:412px;top:6.200px;width:28.400px;height:16.300px"></div><svg class="abs" style="left:419.800px;top:11.500px" width="7.200" height="5.600" viewBox="0 0 17 14"><rect x="0" y="0" width="7.500" height="6" fill="#fff"/><rect x="9.500" y="0" width="7.500" height="6" fill="#fff"/><rect x="0" y="8" width="7.500" height="6" fill="#fff"/><rect x="9.500" y="8" width="7.500" height="6" fill="#fff"/></svg><div class="abs" style="left:431.5px;top:13.0px;width:0;height:0;border-left:2px solid transparent;border-right:2px solid transparent;border-top:2.400px solid #fff"></div></div>
<div id="stagebg" class="abs">
<svg class="abs" style="left:0;top:0" width="449" height="238" viewBox="183 54 449 238">
<defs>
<linearGradient id="bgg" x1="0" y1="0" x2="1" y2="0"><stop offset="0" stop-color="#e9dde0"/><stop offset="0.5" stop-color="#dcd5d8"/><stop offset="1" stop-color="#d2cfd2"/></linearGradient>
<linearGradient id="bgv" x1="0" y1="0" x2="0" y2="1"><stop offset="0" stop-color="#fff" stop-opacity="0"/><stop offset="0.65" stop-color="#fff" stop-opacity="0.03"/><stop offset="1" stop-color="#fbf3f6" stop-opacity="0.4"/></linearGradient>
<linearGradient id="bgt" x1="0" y1="0" x2="0" y2="1"><stop offset="0" stop-color="#9f9a9f" stop-opacity=".28"/><stop offset="1" stop-color="#9f9a9f" stop-opacity="0"/></linearGradient>
<clipPath id="cv"><rect x="217.5" y="66.5" width="378.5" height="212.5"/></clipPath>
</defs>
<rect x="216.5" y="65.5" width="380.5" height="214.5" fill="#6f737b"/>
<rect x="217.5" y="280" width="379" height="5" fill="#7c8088"/>
<rect x="217.5" y="66.5" width="378.5" height="212.5" fill="url(#bgg)"/>
<g clip-path="url(#cv)">
<rect x="217" y="66" width="84" height="24" fill="#fff" opacity="0.22"/>
<rect x="300.5" y="66" width="10" height="24" fill="#b8aeb3" opacity="0.55"/>
<rect x="310" y="66" width="70" height="20" fill="#fff" opacity="0.18"/>
<rect x="380" y="66" width="40" height="26" fill="#c6bfc3" opacity="0.45"/>
<rect x="420" y="66" width="60" height="18" fill="#bdb9bd" opacity="0.45"/>
<rect x="480" y="66" width="50" height="30" fill="#d9d6d9" opacity="0.5"/>
<rect x="505" y="66" width="91" height="40" fill="#c2bfc3" opacity="0.45"/>
<rect x="540" y="66" width="30" height="20" fill="#dddbdd" opacity="0.5"/>
<rect x="575" y="80" width="21" height="50" fill="#dcdadc" opacity="0.5"/>
<rect x="505" y="96" width="32" height="60" fill="#e2e0e3" opacity="0.6"/>
<rect x="510" y="120" width="22" height="30" fill="#deddde" opacity="0.5"/>
<rect x="575" y="130" width="21" height="60" fill="#c8c6c9" opacity="0.4"/>
<rect x="217" y="96" width="20" height="70" fill="#dccfd4" opacity="0.5"/>
<rect x="222" y="140" width="14" height="40" fill="#fff" opacity="0.25"/>
<rect x="280" y="96" width="18" height="60" fill="#fff" opacity="0.22"/>
<rect x="283" y="120" width="15" height="50" fill="#d9cdd2" opacity="0.4"/>
<rect x="217" y="185" width="22" height="50" fill="#fff" opacity="0.25"/>
<rect x="217" y="215" width="40" height="64" fill="#d2cbcf" opacity="0.45"/>
<rect x="228" y="222" width="34" height="34" fill="#ece8ea" opacity="0.6"/>
<rect x="275" y="170" width="23" height="70" fill="#e9e4e6" opacity="0.5"/>
<rect x="280" y="215" width="18" height="45" fill="#d5ced2" opacity="0.45"/>
<rect x="505" y="160" width="32" height="75" fill="#d5d3d6" opacity="0.5"/>
<rect x="510" y="185" width="25" height="40" fill="#c4c2c6" opacity="0.45"/>
<rect x="505" y="232" width="60" height="47" fill="#e6e5e7" opacity="0.55"/>
<rect x="575" y="190" width="21" height="89" fill="#dedcdf" opacity="0.5"/>
<rect x="580" y="230" width="16" height="49" fill="#c9c7ca" opacity="0.4"/>
<rect x="297" y="251" width="60" height="28" fill="#e9e7e9" opacity="0.6"/>
<rect x="330" y="258" width="50" height="21" fill="#cfcdd0" opacity="0.45"/>
<rect x="380" y="251" width="70" height="28" fill="#ecebed" opacity="0.55"/>
<rect x="440" y="256" width="40" height="23" fill="#cbc9cc" opacity="0.45"/>
<rect x="470" y="251" width="60" height="28" fill="#e8e7e9" opacity="0.5"/>
<rect x="382.4" y="239.6" width="26" height="20" fill="#ffffff" opacity="0.31"/>
<rect x="251.4" y="128.8" width="26" height="12" fill="#ffffff" opacity="0.31"/>
<rect x="240.6" y="73.1" width="12" height="26" fill="#c4bfc3" opacity="0.13"/>
<rect x="218.7" y="83.3" width="14" height="20" fill="#aaa6aa" opacity="0.30"/>
<rect x="500.5" y="171.1" width="10" height="16" fill="#ffffff" opacity="0.26"/>
<rect x="533.6" y="146.4" width="10" height="10" fill="#c4bfc3" opacity="0.12"/>
<rect x="391.8" y="270.9" width="14" height="8" fill="#ffffff" opacity="0.16"/>
<rect x="267.5" y="213.8" width="8" height="8" fill="#ffffff" opacity="0.24"/>
<rect x="295.3" y="120.5" width="22" height="22" fill="#c4bfc3" opacity="0.17"/>
<rect x="364.9" y="244.6" width="8" height="8" fill="#b9b4b8" opacity="0.13"/>
<rect x="313.3" y="225.9" width="12" height="12" fill="#ffffff" opacity="0.21"/>
<rect x="295.1" y="198.4" width="10" height="10" fill="#ffffff" opacity="0.22"/>
<rect x="431.9" y="232.5" width="26" height="26" fill="#ffffff" opacity="0.23"/>
<rect x="245.9" y="75.5" width="22" height="26" fill="#ffffff" opacity="0.25"/>
<rect x="281.2" y="210.1" width="26" height="26" fill="#ffffff" opacity="0.20"/>
<rect x="268.6" y="159.2" width="12" height="12" fill="#ffffff" opacity="0.30"/>
<rect x="268.1" y="72.9" width="30" height="30" fill="#ffffff" opacity="0.33"/>
<rect x="439.0" y="81.6" width="16" height="8" fill="#ffffff" opacity="0.21"/>
<rect x="514.5" y="255.4" width="8" height="12" fill="#ffffff" opacity="0.29"/>
<rect x="570.1" y="72.1" width="10" height="20" fill="#ffffff" opacity="0.15"/>
<rect x="221.6" y="80.6" width="22" height="22" fill="#ffffff" opacity="0.17"/>
<rect x="523.8" y="82.8" width="26" height="26" fill="#b9b4b8" opacity="0.18"/>
<rect x="310.6" y="68.3" width="26" height="20" fill="#ffffff" opacity="0.29"/>
<rect x="497.4" y="136.6" width="14" height="14" fill="#aaa6aa" opacity="0.28"/>
<rect x="298.7" y="252.9" width="14" height="20" fill="#ffffff" opacity="0.18"/>
<rect x="480.2" y="264.6" width="18" height="8" fill="#ffffff" opacity="0.18"/>
<rect x="555.8" y="232.2" width="26" height="26" fill="#ffffff" opacity="0.25"/>
<rect x="384.4" y="80.9" width="18" height="26" fill="#ffffff" opacity="0.32"/>
<rect x="387.6" y="71.0" width="8" height="20" fill="#b9b4b8" opacity="0.26"/>
<rect x="290.8" y="164.4" width="18" height="12" fill="#ffffff" opacity="0.15"/>
<rect x="230.2" y="111.3" width="26" height="26" fill="#c4bfc3" opacity="0.25"/>
<rect x="579.8" y="97.5" width="30" height="30" fill="#c4bfc3" opacity="0.28"/>
<rect x="550.9" y="146.7" width="10" height="10" fill="#ffffff" opacity="0.19"/>
<rect x="430.3" y="249.8" width="8" height="8" fill="#aaa6aa" opacity="0.20"/>
<rect x="539.2" y="230.5" width="14" height="14" fill="#b9b4b8" opacity="0.16"/>
<rect x="414.6" y="228.1" width="22" height="16" fill="#ffffff" opacity="0.33"/>
<rect x="248.0" y="158.1" width="8" height="8" fill="#aaa6aa" opacity="0.21"/>
<rect x="542.3" y="155.6" width="8" height="8" fill="#ffffff" opacity="0.26"/>
<rect x="589.9" y="252.4" width="12" height="12" fill="#c4bfc3" opacity="0.24"/>
<rect x="469.2" y="217.6" width="26" height="26" fill="#ffffff" opacity="0.26"/>
<rect x="404.2" y="247.4" width="30" height="26" fill="#ffffff" opacity="0.28"/>
<rect x="269.5" y="178.2" width="14" height="14" fill="#ffffff" opacity="0.25"/>
<rect x="233.5" y="257.7" width="8" height="8" fill="#c4bfc3" opacity="0.14"/>
<rect x="565.1" y="161.9" width="10" height="8" fill="#aaa6aa" opacity="0.17"/>
<rect x="341.3" y="246.2" width="26" height="26" fill="#aaa6aa" opacity="0.21"/>
<rect x="448.1" y="258.5" width="10" height="10" fill="#ffffff" opacity="0.31"/>
<rect x="275.3" y="68.5" width="8" height="8" fill="#ffffff" opacity="0.29"/>
<rect x="472.3" y="247.9" width="30" height="12" fill="#ffffff" opacity="0.28"/>
<rect x="291.4" y="192.3" width="30" height="26" fill="#c4bfc3" opacity="0.16"/>
<rect x="440.2" y="248.6" width="18" height="16" fill="#ffffff" opacity="0.31"/>
<rect x="400" y="66.500" width="196" height="90" fill="url(#bgt)"/>
<rect x="217.500" y="66.500" width="378.500" height="212.500" fill="url(#bgv)"/>
</g>
<!-- board -->
<rect x="298.200" y="91.200" width="206.600" height="149" rx="5" fill="#724a3c"/>
<rect x="303.5" y="96.5" width="196" height="135" fill="#4a9e5f"/>
<path d="M499.200 96.800 L499.200 231.700 L303.700 231.700 Z" fill="#448b56"/>
<rect x="297.800" y="237.600" width="208.700" height="13" rx="2.500" fill="#5a352e"/>
<text x="401.500" y="125" text-anchor="middle" font-family="'Liberation Serif',serif" font-weight="bold" font-style="italic" font-size="20" fill="#fff" stroke="#fff" stroke-width=".45" textLength="123.500" lengthAdjust="spacingAndGlyphs">Quote of the day</text>
<g font-family="'Liberation Sans',sans-serif" font-size="11" fill="#fff" text-anchor="middle">
<text x="404" y="167.500" textLength="186" lengthAdjust="spacingAndGlyphs">Do not think that what is hard to master</text>
<text x="403" y="179.300" textLength="156" lengthAdjust="spacingAndGlyphs">is humanly impossible; and if it is</text>
<text x="404" y="191" textLength="164" lengthAdjust="spacingAndGlyphs">humanly possible, consider it to be</text>
<text x="404" y="202.500" textLength="83" lengthAdjust="spacingAndGlyphs">within your reach.</text>
<text x="404.500" y="226" textLength="104" lengthAdjust="spacingAndGlyphs">- MARCUS AURELIUS -</text>
</g>
<!-- woman -->
<g>
<path d="M255 83.400 C244 83.400 236 90 234 101 C233 108 229 112 229.400 120 C229.600 127 233 131 237 133 L243 141 L241.500 151 L270 151 L268 141 L277.700 133 C282 131 284.500 126 284 119.500 C283.500 112 279 108 277.700 101 C276 90 267 83.400 255 83.400 Z" fill="#7a5540"/>
<rect x="250" y="138" width="13.500" height="16" fill="#e6a560"/>
<path d="M236.200 110 L236.200 122 C236.200 136 247 146.500 257 146.500 C267 146.500 278.600 136 278.600 122 L278.600 110 C278.600 102 270 97 257 97 C244 97 236.200 102 236.200 110 Z" fill="#f6c98c"/>
<path d="M257 97 C244 97 236.200 102 236.200 110 L236.200 122 C236.200 136 247 146.500 257 146.500 Z" fill="#f1b66d"/>
<path d="M236.200 124 Q237 116.500 243.400 110.500 Q249.500 105 257.500 101 Q258.800 100.300 260.200 101 Q267 104 273.200 110.500 Q277.600 115.500 278.600 123 L284 119.500 C283.500 112 279 108 277.700 101 C276 90 267 83.400 255 83.400 C244 83.400 236 90 234 101 C233 108 229 112 229.400 120 Z" fill="#7a5540"/>
<circle cx="247" cy="121.800" r="2.100" fill="#5a2d2a"/><circle cx="266" cy="121.800" r="2.100" fill="#5a2d2a"/>
<path d="M249.400 133.200 C253.500 134.800 258.500 134.800 262.700 133.200 C262 137.500 259 139.300 256 139.300 C253 139.300 250 137.500 249.400 133.200 Z" fill="#e04e2c"/>
<path d="M251.500 134.300 C254.500 135.300 257.500 135.300 260.600 134.300 C259.500 137 252.500 137 251.500 134.300 Z" fill="#fff"/>
<!-- raised arm -->
<path d="M270 150.500 C280 153 290 155.500 298 153.500 C307 151 313 143 316 133 L328 133.500 C326 145 318 156 308 160.500 C298 164.500 286 164 276.700 163 Z" fill="#ebedee"/>
<path d="M316.500 133.500 C315.500 129 316.500 125.500 319.500 124.500 L321.800 117 C322.300 115.800 324 116.100 324 117.500 L323.500 124.500 C327 125.500 328.500 128.500 328 132 C327.800 133 327.500 133.500 327 134 Z" fill="#f1b66d"/>
<!-- left arm -->
<path d="M243 150.800 C238 151 233 154 229 161 C225 168 221.500 176 222 184 C222.500 192 226 198 231 203.500 L238 199 C233 194 230 189 229.500 183 C229 177 233 172 240.300 168 Z" fill="#c9cccd"/>
<path d="M230.500 201.500 C229.500 205 230 209 233 211 C236 212.500 240 211 241.500 208 C242.500 205.500 242 202 240 200 L236 198.500 Z" fill="#f3bb74"/>
<!-- torso -->
<path d="M243 150.800 L270 150.500 C275 151.500 277 156 276.700 163 L273.800 199 L240 199 L240.300 165 C239 158 240 152 243 150.800 Z" fill="#ebedee"/>
<path d="M243 150.800 L256.400 150.600 L256.400 199 L240 199 L240.300 165 C239 158 240 152 243 150.800 Z" fill="#c9cccd"/>
<path d="M241.200 150.600 L250 149.800 L256.400 153 L246.300 158 Z" fill="#f4f5f5"/><path d="M271.600 150.400 L263.500 149.800 L256.400 153 L267.400 157.300 Z" fill="#fcfcfc"/>
<g fill="#3d9bb5"><circle cx="256.400" cy="166.700" r="1.250"/><circle cx="256.400" cy="173.300" r="1.250"/><circle cx="256.400" cy="179.900" r="1.250"/><circle cx="256.400" cy="186.400" r="1.250"/><circle cx="256.400" cy="192.800" r="1.250"/></g>
<rect x="240" y="198" width="33.800" height="2.700" fill="#36424f"/><rect x="253" y="196.600" width="7.300" height="5.300" fill="#3e4c5a"/>
<path d="M257.500 200.600 L273.800 200.600 C276 204 277.800 210 277.600 218 C277.300 245 275 270 272.500 289.500 L262.600 289.500 L257.500 208.800 Z" fill="#ea682e"/>
<path d="M240 200.600 L257.500 200.600 L257.500 208.800 L251.800 289.500 L242.600 289.500 C240 265 237 240 237.200 218 C237.200 210 238.500 204 240 200.600 Z" fill="#d9562a"/>
<path d="M257.500 200.600 L273.800 200.600 C275 202.500 276 204.500 276.500 206.500 C270 208.500 262 208.500 257.500 207 Z" fill="#d9562a" opacity=".7"/>
<rect x="243.500" y="289.500" width="7.500" height="1.800" fill="#3d8fa5"/><rect x="263.500" y="289.500" width="7.500" height="1.800" fill="#3d8fa5"/>
</g>
<!-- man -->
<g>
<rect x="547.600" y="138" width="17" height="13" fill="#c08246"/><path d="M547.600 142 C552 146.500 560 146.500 564.600 142 L564.600 145 C560 148.500 552 148.500 547.600 145 Z" fill="#a86a35"/>
<path d="M534 100 L534 123 C534 136 545 143.800 555 143.800 C565 143.800 575.500 136 575.500 123 L575.500 100 Z" fill="#d4a166"/>
<path d="M555.700 100 L575.500 100 L575.500 123 C575.500 136 565 143.800 555.700 143.800 Z" fill="#c48a4f"/>
<path d="M535 122.100 C533.500 119 532.800 116.500 532.300 114 C531.300 111 530.500 108 530.100 105 C529.600 103 529.400 101.500 529.500 100.500 C529.800 98 531 96.300 532.300 96 L534 97 C535 95 536 93 537.700 91.500 C539.500 89.500 542 87.500 544.900 86.100 C548 84.500 552 83.400 555.700 83.400 C559.500 83.400 563 83.800 566.500 84.800 C570 86 573 88 575.500 90.600 C577.500 92.500 579.500 95.500 580.900 98.700 L584.900 106.500 C582.500 104.500 580.500 103.200 578.200 102.300 L575.500 101.400 C576.500 103.500 577 106 577.300 108.600 C577.600 113 577.400 118 576.800 122.100 C576.300 119 575.500 116.500 574.600 114 C573.800 111 573 108 571.900 105 L568.300 102.300 L566.100 107.700 C565 106.500 563.500 105.500 562 105 L557.500 103.200 L554.800 108.300 C553.800 107.300 552.500 106.500 551.200 105.900 L546.700 103.800 C545 103.800 543 104.200 541.300 105 C540 106.300 539.200 107.800 538.600 109.500 C537.500 112 536.800 114.500 536.200 116.700 Z" fill="#0f3447"/>
<circle cx="546.100" cy="120.700" r="2" fill="#6b3b2e"/><circle cx="564.100" cy="120.700" r="2" fill="#6b3b2e"/>
<path d="M549.900 133.500 C553 137 557.500 137 560.200 133.500" fill="none" stroke="#e0703a" stroke-width="1.400" stroke-linecap="round"/>
<!-- raised arm -->
<path d="M534 150 C528 153 521 153.500 516 151.500 C509 148.500 503 141 497 130.500 L488 133 C490 143 496 152 504 157 C513 162 524 161.500 534 158 Z" fill="#d4713a"/>
<path d="M496.500 131 C497.500 127.500 496.500 124 493.500 123 L491.200 116.500 C490.700 115.300 489 115.600 489 117 L489.800 123.500 C486 124.500 484.200 127.500 484.800 131 C485.300 133.500 487 134.500 489 134 Z" fill="#c48a4f"/>
<!-- other arm -->
<path d="M574 150.300 C581 150.500 588 155 592.600 163.400 C596 170 596.500 178 594 186 C592 192 588 198 584.500 203 L577 199.500 C581 194 584.500 188 586 182 C587 176 585 170 577.300 165 Z" fill="#c4622f"/>
<path d="M584.500 200.500 C585.500 204 585 208 582 210 C579 211.500 574.500 210.500 572.500 207.500 C571 205 571.500 201.500 574 199.500 L578 198.300 Z" fill="#c48a4f"/>
<!-- torso -->
<path d="M538 150 L574 150.300 C577 152 577.800 156 577.300 165 L573.700 210.300 L536.800 210.300 L533.200 158 C533 154 535 151 538 150 Z" fill="#c4622f"/>
<path d="M538 150 L555.700 150.100 L555.700 210.300 L536.800 210.300 L533.200 158 C533 154 535 151 538 150 Z" fill="#d4713a"/>
<path d="M544.900 148.600 C550 151.500 561 151.500 566.500 148.600 L566.500 152 C561 155.500 550 155.500 544.900 152 Z" fill="#7d6a5e"/>
<text x="554.600" y="187.200" text-anchor="middle" font-family="'DejaVu Serif','Liberation Serif',serif" font-weight="bold" font-size="30" fill="#fff" stroke="#fff" stroke-width="1.400" stroke-linejoin="miter" textLength="19.500" lengthAdjust="spacingAndGlyphs">A</text>
<path d="M556 210.300 L573.700 210.300 L572.400 288.500 L558.300 288.500 L556 226 Z" fill="#5f8fa1"/>
<path d="M536.800 210.300 L556 210.300 L556 226 L551.500 288.500 L538 288.500 Z" fill="#79a8b8"/>
<path d="M537 291.500 L540.500 289 L551 287.600 L551.800 291.500 Z" fill="#050505"/><path d="M558.300 291.500 L558.500 287.600 L569 289 L573.500 291.500 Z" fill="#050505"/>
</g>
<rect x="183" y="280" width="449" height="12" fill="#868b94" opacity=".22"/>
</svg>
</div>
<div id="play" class="abs">
<div class="abs" style="left:0;top:0;width:449px;height:1px;background:#2a2c31"></div><svg class="abs" style="left:186.5px;top:9.0px" width="8.0" height="8.0" viewBox="0 0 16 16"><rect x="0" y="0" width="3" height="16" fill="#fff"/><path d="M16 0v16L3.500 8z" fill="#fff"/></svg><svg class="abs" style="left:214.0px;top:9.2px" width="11.0" height="7.5" viewBox="0 0 22 15"><path d="M11 0v15L0 7.500zM22 0v15L11 7.500z" fill="#fff"/></svg><svg class="abs" style="left:241.8px;top:7.5px" width="9.0" height="11.0" viewBox="0 0 18 22"><path d="M0 0v22L18 11z" fill="#fff"/></svg><svg class="abs" style="left:268.5px;top:9.2px" width="11.0" height="7.5" viewBox="0 0 22 15"><path d="M0 0v15L11 7.500zM11 0v15L22 7.500z" fill="#fff"/></svg><svg class="abs" style="left:299.0px;top:9.0px" width="8.0" height="8.0" viewBox="0 0 16 16"><rect x="13" y="0" width="3" height="16" fill="#fff"/><path d="M0 0v16L12.500 8z" fill="#fff"/></svg><span class="t" style="left:394.50px;top:8.30px;font-size:8.00px;font-weight:bold;color:#fff;transform:scaleX(0.904);">00:02</span><span class="t" style="left:415.50px;top:8.30px;font-size:8.00px;font-weight:normal;color:#7d8088;transform:scaleX(1.119);">/</span><span class="t" style="left:420.50px;top:8.30px;font-size:8.00px;font-weight:normal;color:#7d8088;transform:scaleX(0.973);">00:05</span></div>
<div id="right" class="abs">
<div class="abs" style="left:0;top:1px;width:193px;height:1px;background:#3d4046"></div><div class="abs" style="left:0;top:19px;width:193px;height:1px;background:#3d4046"></div><div class="abs" style="left:8.400px;top:7.500px;width:8px;height:7.500px;border:1px solid #b9bbc0;border-radius:1.500px"></div><div class="abs" style="left:10.400px;top:10.800px;width:4px;height:1px;background:#d9dbe0"></div><span class="t" style="left:22.70px;top:7.10px;font-size:8.00px;font-weight:bold;color:#fff;transform:scaleX(0.846);">Stage Properties</span><span class="t" style="left:9.00px;top:30.60px;font-size:7.80px;font-weight:normal;color:#8d9098;transform:scaleX(0.758);">Size</span><div class="abs" style="left:74px;top:28.7px;width:110.500px;height:13px;background:#383a41;border:1px solid #494c53;border-radius:2px"></div><span class="t" style="left:77.50px;top:30.60px;font-size:7.80px;font-weight:normal;color:#fff;transform:scaleX(0.902);">Video 16:9</span><svg class="abs" style="left:175.500px;top:31.9px" width="5" height="7" viewBox="0 0 10 14"><path d="M1.500 5L5 1.500L8.500 5M1.500 9L5 12.500L8.500 9" fill="none" stroke="#b9bbc0" stroke-width="1.600"/></svg><span class="t" style="left:9.00px;top:52.90px;font-size:7.80px;font-weight:normal;color:#8d9098;transform:scaleX(0.859);">Background-color</span><div class="abs" style="left:74px;top:50px;width:14px;height:14px;background:#383a41;border:1px solid #50535a;border-radius:2px"></div><div class="abs" style="left:77px;top:53px;width:8px;height:8px;background:#f08a00;border-radius:1px"></div><span class="t" style="left:9.00px;top:74.30px;font-size:7.80px;font-weight:normal;color:#8d9098;transform:scaleX(0.860);">Project Mode</span><div class="abs" style="left:74px;top:71.8px;width:110.500px;height:13px;background:#383a41;border:1px solid #494c53;border-radius:2px"></div><span class="t" style="left:77.50px;top:73.70px;font-size:7.80px;font-weight:normal;color:#fff;transform:scaleX(0.883);">Video</span><svg class="abs" style="left:175.500px;top:75.0px" width="5" height="7" viewBox="0 0 10 14"><path d="M1.500 5L5 1.500L8.500 5M1.500 9L5 12.500L8.500 9" fill="none" stroke="#b9bbc0" stroke-width="1.600"/></svg></div>
<div class="abs" style="left:0;top:317.500px;width:825px;height:.8px;background:#3b3e44"></div>
<div id="tl" class="abs">
<div class="abs" style="left:2.300px;top:5.6px;width:13px;height:13.200px;background:#1e9bf0;border-radius:2px 0 0 2px"><div class="abs" style="left:2.500px;top:3.200px;width:8px;height:1.300px;background:#fff;box-shadow:0 2.500px 0 #fff,0 5px 0 #fff"></div></div>
<div class="abs" style="left:15.300px;top:5.6px;width:13.700px;height:13.200px;background:#53565d;border-radius:0 2px 2px 0"><div class="abs" style="left:3px;top:3.200px;width:8px;height:7px;background:repeating-linear-gradient(#a9acb2 0,#a9acb2 1.300px,#8b8e95 1.300px,#8b8e95 2px)"></div></div>
<div class="abs" style="left:160.900px;top:5.6px;width:13.200px;height:13.200px;background:#1e9bf0;border-radius:2px"><svg class="abs" style="left:1.800px;top:2.100px" width="9.500" height="9" viewBox="0 0 19 18"><rect x="1" y="6" width="7" height="6" fill="#fff"/><rect x="11" y="6" width="7" height="6" fill="#fff"/><rect x="8" y="8.300" width="3" height="1.400" fill="#fff"/><path d="M9.500 0.500v3.500M9.500 14v3.500" stroke="#bfe2fa" stroke-width="1"/><path d="M7 2.500h5M7 15.500h5" stroke="#bfe2fa" stroke-width=".8"/></svg></div>
<div class="abs row" style="top:23.00px;height:13.75px"><span class="t" style="left:24.50px;top:0.85px;font-size:7.70px;font-weight:normal;color:#cfd1d5;transform:scaleX(0.960);">Female 1 Points 1</span><svg class="abs" style="left:140.500px;top:2.700px" width="7.500" height="6.500" viewBox="0 0 16 12"><path d="M8 0.500C4 0.500 1.200 3.500 0 6c1.200 2.500 4 5.500 8 5.500s6.800-3 8-5.500C14.800 3.500 12 0.500 8 0.500z" fill="#fff"/><circle cx="8" cy="6" r="3.300" fill="#3f4249"/><circle cx="8" cy="6" r="1.600" fill="#fff"/></svg><svg class="abs" style="left:153.200px;top:2.500px" width="6.200" height="7.200" viewBox="0 0 12 16" preserveAspectRatio="none"><path d="M2.500 7V4.500a3.500 3.500 0 0 1 7 0V7" fill="none" stroke="#9aa3ad" stroke-width="1.800"/><rect x="0.500" y="6.500" width="11" height="9" rx="1" fill="#7f8b97"/></svg><svg class="abs" style="left:165px;top:2.400px" width="6.900" height="7.400" viewBox="0 0 14 16" preserveAspectRatio="none"><path d="M4.500 0.500h5l1 1.500h3v2.500H0.500V2h3z" fill="#fff"/><path d="M1.500 5.500h11l-.8 9a1.500 1.500 0 0 1-1.500 1.500h-6.400a1.500 1.500 0 0 1-1.500-1.500z" fill="#fff"/></svg></div>
<div class="abs trk" style="top:23.00px;height:13.75px"></div>
<div class="abs row" style="top:36.75px;height:13.75px"><div class="abs" style="left:16.300px;top:3.300px;width:0;height:0;border-top:3px solid transparent;border-bottom:3px solid transparent;border-left:3.500px solid #fff"></div><span class="t" style="left:24.50px;top:0.85px;font-size:7.70px;font-weight:normal;color:#cfd1d5;transform:scaleX(0.972);">Male 3 Points 1</span><svg class="abs" style="left:140.500px;top:2.700px" width="7.500" height="6.500" viewBox="0 0 16 12"><path d="M8 0.500C4 0.500 1.200 3.500 0 6c1.200 2.500 4 5.500 8 5.500s6.800-3 8-5.500C14.800 3.500 12 0.500 8 0.500z" fill="#fff"/><circle cx="8" cy="6" r="3.300" fill="#3f4249"/><circle cx="8" cy="6" r="1.600" fill="#fff"/></svg><svg class="abs" style="left:153.200px;top:2.500px" width="6.200" height="7.200" viewBox="0 0 12 16" preserveAspectRatio="none"><path d="M2.500 7V4.500a3.500 3.500 0 0 1 7 0V7" fill="none" stroke="#9aa3ad" stroke-width="1.800"/><rect x="0.500" y="6.500" width="11" height="9" rx="1" fill="#7f8b97"/></svg><svg class="abs" style="left:165px;top:2.400px" width="6.900" height="7.400" viewBox="0 0 14 16" preserveAspectRatio="none"><path d="M4.500 0.500h5l1 1.500h3v2.500H0.500V2h3z" fill="#fff"/><path d="M1.500 5.500h11l-.8 9a1.500 1.500 0 0 1-1.500 1.500h-6.400a1.500 1.500 0 0 1-1.500-1.500z" fill="#fff"/></svg></div>
<div class="abs trk" style="top:36.75px;height:13.75px"></div>
<div class="abs row" style="top:50.50px;height:13.75px"><div class="abs" style="left:16.300px;top:3.300px;width:0;height:0;border-top:3px solid transparent;border-bottom:3px solid transparent;border-left:3.500px solid #fff"></div><span class="t" style="left:24.50px;top:1.50px;font-size:7.70px;font-weight:normal;color:#cfd1d5;transform:scaleX(1.025);">Do not think that what is hard t...</span><svg class="abs" style="left:140.500px;top:2.700px" width="7.500" height="6.500" viewBox="0 0 16 12"><path d="M8 0.500C4 0.500 1.200 3.500 0 6c1.200 2.500 4 5.500 8 5.500s6.800-3 8-5.500C14.800 3.500 12 0.500 8 0.500z" fill="#fff"/><circle cx="8" cy="6" r="3.300" fill="#3f4249"/><circle cx="8" cy="6" r="1.600" fill="#fff"/></svg><svg class="abs" style="left:153.200px;top:2.500px" width="6.200" height="7.200" viewBox="0 0 12 16" preserveAspectRatio="none"><path d="M2.500 7V4.500a3.500 3.500 0 0 1 7 0V7" fill="none" stroke="#9aa3ad" stroke-width="1.800"/><rect x="0.500" y="6.500" width="11" height="9" rx="1" fill="#7f8b97"/></svg><svg class="abs" style="left:165px;top:2.400px" width="6.900" height="7.400" viewBox="0 0 14 16" preserveAspectRatio="none"><path d="M4.500 0.500h5l1 1.500h3v2.500H0.500V2h3z" fill="#fff"/><path d="M1.500 5.500h11l-.8 9a1.500 1.500 0 0 1-1.500 1.500h-6.400a1.500 1.500 0 0 1-1.500-1.500z" fill="#fff"/></svg></div>
<div class="abs trk" style="top:50.50px;height:13.75px"></div>
<div class="abs row" style="top:64.25px;height:13.75px"><div class="abs" style="left:16.300px;top:3.300px;width:0;height:0;border-top:3px solid transparent;border-bottom:3px solid transparent;border-left:3.500px solid #fff"></div><span class="t" style="left:24.50px;top:1.50px;font-size:7.70px;font-weight:normal;color:#cfd1d5;transform:scaleX(1.027);">Quote of the day</span><svg class="abs" style="left:140.500px;top:2.700px" width="7.500" height="6.500" viewBox="0 0 16 12"><path d="M8 0.500C4 0.500 1.200 3.500 0 6c1.200 2.500 4 5.500 8 5.500s6.800-3 8-5.500C14.800 3.500 12 0.500 8 0.500z" fill="#fff"/><circle cx="8" cy="6" r="3.300" fill="#3f4249"/><circle cx="8" cy="6" r="1.600" fill="#fff"/></svg><svg class="abs" style="left:153.200px;top:2.500px" width="6.200" height="7.200" viewBox="0 0 12 16" preserveAspectRatio="none"><path d="M2.500 7V4.500a3.500 3.500 0 0 1 7 0V7" fill="none" stroke="#9aa3ad" stroke-width="1.800"/><rect x="0.500" y="6.500" width="11" height="9" rx="1" fill="#7f8b97"/></svg><svg class="abs" style="left:165px;top:2.400px" width="6.900" height="7.400" viewBox="0 0 14 16" preserveAspectRatio="none"><path d="M4.500 0.500h5l1 1.500h3v2.500H0.500V2h3z" fill="#fff"/><path d="M1.500 5.500h11l-.8 9a1.500 1.500 0 0 1-1.500 1.500h-6.400a1.500 1.500 0 0 1-1.500-1.500z" fill="#fff"/></svg></div>
<div class="abs trk" style="top:64.25px;height:13.75px"></div>
<div class="abs row" style="top:78.00px;height:13.75px"><span class="t" style="left:24.50px;top:1.50px;font-size:7.70px;font-weight:normal;color:#cfd1d5;transform:scaleX(0.998);">towe 1</span><svg class="abs" style="left:153.200px;top:2.500px" width="6.200" height="7.200" viewBox="0 0 12 16" preserveAspectRatio="none"><path d="M2.500 7V4.500a3.500 3.500 0 0 1 7 0V7" fill="none" stroke="#9aa3ad" stroke-width="1.800"/><rect x="0.500" y="6.500" width="11" height="9" rx="1" fill="#7f8b97"/></svg><svg class="abs" style="left:165px;top:2.400px" width="6.900" height="7.400" viewBox="0 0 14 16" preserveAspectRatio="none"><path d="M4.500 0.500h5l1 1.500h3v2.500H0.500V2h3z" fill="#fff"/><path d="M1.500 5.500h11l-.8 9a1.500 1.500 0 0 1-1.500 1.500h-6.400a1.500 1.500 0 0 1-1.500-1.500z" fill="#fff"/></svg></div>
<div class="abs trk" style="top:78.00px;height:13.75px"></div>
<div class="abs row" style="top:91.75px;height:13.75px"><span class="t" style="left:24.50px;top:1.20px;font-size:7.70px;font-weight:normal;color:#cfd1d5;transform:scaleX(0.988);">cart 1</span><svg class="abs" style="left:153.200px;top:2.500px" width="6.200" height="7.200" viewBox="0 0 12 16" preserveAspectRatio="none"><path d="M2.500 7V4.500a3.500 3.500 0 0 1 7 0V7" fill="none" stroke="#9aa3ad" stroke-width="1.800"/><rect x="0.500" y="6.500" width="11" height="9" rx="1" fill="#7f8b97"/></svg><svg class="abs" style="left:165px;top:2.400px" width="6.900" height="7.400" viewBox="0 0 14 16" preserveAspectRatio="none"><path d="M4.500 0.500h5l1 1.500h3v2.500H0.500V2h3z" fill="#fff"/><path d="M1.500 5.500h11l-.8 9a1.500 1.500 0 0 1-1.500 1.500h-6.400a1.500 1.500 0 0 1-1.500-1.500z" fill="#fff"/></svg></div>
<div class="abs trk" style="top:91.75px;height:13.75px"></div>
<div class="abs" style="left:182.00px;top:5.9px;width:1px;height:12.200px;background:#5d6067"></div>
<span class="t" style="left:184.10px;top:5.40px;font-size:7.50px;font-weight:normal;color:#c9cbd0;transform:scaleX(0.841);">00:00</span>
<div class="abs" style="left:193.09px;top:15.0px;width:1px;height:3px;background:#565960"></div>
<div class="abs" style="left:204.18px;top:15.0px;width:1px;height:3px;background:#565960"></div>
<div class="abs" style="left:215.27px;top:15.0px;width:1px;height:3px;background:#565960"></div>
<div class="abs" style="left:226.36px;top:15.0px;width:1px;height:3px;background:#565960"></div>
<div class="abs" style="left:237.45px;top:5.9px;width:1px;height:12.200px;background:#5d6067"></div>
<span class="t" style="left:239.55px;top:5.40px;font-size:7.50px;font-weight:normal;color:#c9cbd0;transform:scaleX(0.841);">00:01</span>
<div class="abs" style="left:248.54px;top:15.0px;width:1px;height:3px;background:#565960"></div>
<div class="abs" style="left:259.63px;top:15.0px;width:1px;height:3px;background:#565960"></div>
<div class="abs" style="left:270.72px;top:15.0px;width:1px;height:3px;background:#565960"></div>
<div class="abs" style="left:281.81px;top:15.0px;width:1px;height:3px;background:#565960"></div>
<div class="abs" style="left:292.90px;top:5.9px;width:1px;height:12.200px;background:#5d6067"></div>
<span class="t" style="left:295.00px;top:5.40px;font-size:7.50px;font-weight:normal;color:#c9cbd0;transform:scaleX(0.841);">00:02</span>
<div class="abs" style="left:303.99px;top:15.0px;width:1px;height:3px;background:#565960"></div>
<div class="abs" style="left:315.08px;top:15.0px;width:1px;height:3px;background:#565960"></div>
<div class="abs" style="left:326.17px;top:15.0px;width:1px;height:3px;background:#565960"></div>
<div class="abs" style="left:337.26px;top:15.0px;width:1px;height:3px;background:#565960"></div>
<div class="abs" style="left:348.35px;top:5.9px;width:1px;height:12.200px;background:#5d6067"></div>
<span class="t" style="left:350.45px;top:5.40px;font-size:7.50px;font-weight:normal;color:#c9cbd0;transform:scaleX(0.841);">00:03</span>
<div class="abs" style="left:359.44px;top:15.0px;width:1px;height:3px;background:#565960"></div>
<div class="abs" style="left:370.53px;top:15.0px;width:1px;height:3px;background:#565960"></div>
<div class="abs" style="left:381.62px;top:15.0px;width:1px;height:3px;background:#565960"></div>
<div class="abs" style="left:392.71px;top:15.0px;width:1px;height:3px;background:#565960"></div>
<div class="abs" style="left:403.80px;top:5.9px;width:1px;height:12.200px;background:#5d6067"></div>
<span class="t" style="left:405.90px;top:5.40px;font-size:7.50px;font-weight:normal;color:#c9cbd0;transform:scaleX(0.841);">00:04</span>
<div class="abs" style="left:414.89px;top:15.0px;width:1px;height:3px;background:#565960"></div>
<div class="abs" style="left:425.98px;top:15.0px;width:1px;height:3px;background:#565960"></div>
<div class="abs" style="left:437.07px;top:15.0px;width:1px;height:3px;background:#565960"></div>
<div class="abs" style="left:448.16px;top:15.0px;width:1px;height:3px;background:#565960"></div>
<div class="abs" style="left:459.25px;top:5.9px;width:1px;height:12.200px;background:#5d6067"></div>
<span class="t" style="left:461.35px;top:5.40px;font-size:7.50px;font-weight:normal;color:#c9cbd0;transform:scaleX(0.841);">00:05</span>
<div class="abs" style="left:470.34px;top:15.0px;width:1px;height:3px;background:#565960"></div>
<div class="abs" style="left:481.43px;top:15.0px;width:1px;height:3px;background:#565960"></div>
<div class="abs" style="left:492.52px;top:15.0px;width:1px;height:3px;background:#565960"></div>
<div class="abs" style="left:503.61px;top:15.0px;width:1px;height:3px;background:#565960"></div>
<div class="abs" style="left:514.70px;top:5.9px;width:1px;height:12.200px;background:#5d6067"></div>
<span class="t" style="left:516.80px;top:5.40px;font-size:7.50px;font-weight:normal;color:#c9cbd0;transform:scaleX(0.841);">00:06</span>
<div class="abs" style="left:525.79px;top:15.0px;width:1px;height:3px;background:#565960"></div>
<div class="abs" style="left:536.88px;top:15.0px;width:1px;height:3px;background:#565960"></div>
<div class="abs" style="left:547.97px;top:15.0px;width:1px;height:3px;background:#565960"></div>
<div class="abs" style="left:559.06px;top:15.0px;width:1px;height:3px;background:#565960"></div>
<div class="abs" style="left:570.15px;top:5.9px;width:1px;height:12.200px;background:#5d6067"></div>
<span class="t" style="left:572.25px;top:5.40px;font-size:7.50px;font-weight:normal;color:#c9cbd0;transform:scaleX(0.841);">00:07</span>
<div class="abs" style="left:581.24px;top:15.0px;width:1px;height:3px;background:#565960"></div>
<div class="abs" style="left:592.33px;top:15.0px;width:1px;height:3px;background:#565960"></div>
<div class="abs" style="left:603.42px;top:15.0px;width:1px;height:3px;background:#565960"></div>
<div class="abs" style="left:614.51px;top:15.0px;width:1px;height:3px;background:#565960"></div>
<div class="abs" style="left:625.60px;top:5.9px;width:1px;height:12.200px;background:#5d6067"></div>
<span class="t" style="left:627.70px;top:5.40px;font-size:7.50px;font-weight:normal;color:#c9cbd0;transform:scaleX(0.841);">00:08</span>
<div class="abs" style="left:636.69px;top:15.0px;width:1px;height:3px;background:#565960"></div>
<div class="abs" style="left:647.78px;top:15.0px;width:1px;height:3px;background:#565960"></div>
<div class="abs" style="left:658.87px;top:15.0px;width:1px;height:3px;background:#565960"></div>
<div class="abs" style="left:669.96px;top:15.0px;width:1px;height:3px;background:#565960"></div>
<div class="abs" style="left:681.05px;top:5.9px;width:1px;height:12.200px;background:#5d6067"></div>
<span class="t" style="left:683.15px;top:5.40px;font-size:7.50px;font-weight:normal;color:#c9cbd0;transform:scaleX(0.841);">00:09</span>
<div class="abs" style="left:692.14px;top:15.0px;width:1px;height:3px;background:#565960"></div>
<div class="abs" style="left:703.23px;top:15.0px;width:1px;height:3px;background:#565960"></div>
<div class="abs" style="left:714.32px;top:15.0px;width:1px;height:3px;background:#565960"></div>
<div class="abs" style="left:725.41px;top:15.0px;width:1px;height:3px;background:#565960"></div>
<div class="abs" style="left:736.50px;top:5.9px;width:1px;height:12.200px;background:#5d6067"></div>
<span class="t" style="left:738.60px;top:5.40px;font-size:7.50px;font-weight:normal;color:#c9cbd0;transform:scaleX(0.841);">00:10</span>
<div class="abs" style="left:747.59px;top:15.0px;width:1px;height:3px;background:#565960"></div>
<div class="abs" style="left:758.68px;top:15.0px;width:1px;height:3px;background:#565960"></div>
<div class="abs" style="left:769.77px;top:15.0px;width:1px;height:3px;background:#565960"></div>
<div class="abs" style="left:780.86px;top:15.0px;width:1px;height:3px;background:#565960"></div>
<div class="abs" style="left:791.95px;top:5.9px;width:1px;height:12.200px;background:#5d6067"></div>
<span class="t" style="left:794.05px;top:5.40px;font-size:7.50px;font-weight:normal;color:#c9cbd0;transform:scaleX(0.867);">00:11</span>
<div class="abs" style="left:803.04px;top:15.0px;width:1px;height:3px;background:#565960"></div>
<div class="abs" style="left:814.13px;top:15.0px;width:1px;height:3px;background:#565960"></div>
<div class="abs" style="left:182px;top:18.0px;width:643px;height:4.800px;background:#b7b8ba"></div>
<div class="abs" style="left:181.800px;top:18.0px;width:6px;height:4.800px;background:#fff"></div>
<div class="abs" style="left:820px;top:18.0px;width:5px;height:4.800px;background:#fff"></div>
<div class="abs" style="left:820px;top:22.8px;width:5px;height:82.700px;background:#2a2c32"></div>
<div class="abs" style="left:821.300px;top:40.0px;width:3.700px;height:41.500px;background:#b3b5b9"></div>
<div class="abs clip" style="left:254.3px;top:24.20px;width:248.2px;background:#1e9bf0"><span class="t" style="left:4.50px;top:2.20px;font-size:6.80px;font-weight:bold;color:#fff;transform:scaleX(0.885);">Female 1 Points 1</span></div>
<div class="abs clip" style="left:254.3px;top:37.95px;width:248.2px;background:#1e9bf0"><span class="t" style="left:4.50px;top:2.20px;font-size:6.80px;font-weight:bold;color:#fff;transform:scaleX(0.916);">Male 3 Points 1</span></div>
<div class="abs clip" style="left:254.3px;top:51.70px;width:248.2px;background:#f5c100"><span class="t" style="left:4.50px;top:2.20px;font-size:6.80px;font-weight:bold;color:#fff;transform:scaleX(0.930);">Do not think that what is hard to masteris humanly impossible; and if it is&amp;nbsp;</span></div>
<div class="abs clip" style="left:238.0px;top:65.45px;width:264.5px;background:#f5c100"><span class="t" style="left:4.50px;top:2.20px;font-size:6.80px;font-weight:bold;color:#fff;transform:scaleX(0.944);">Quote of the day</span></div>
<div class="abs clip" style="left:498.0px;top:79.20px;width:15.5px;background:#e0447c"><span class="t" style="left:4.50px;top:2.20px;font-size:6.80px;font-weight:bold;color:#fff;transform:scaleX(0.851);">towe 1</span></div>
<div class="abs clip" style="left:182.7px;top:92.95px;width:56.3px;background:#e0447c"><span class="t" style="left:4.50px;top:2.20px;font-size:6.80px;font-weight:bold;color:#fff;transform:scaleX(0.937);">cart 1</span></div>
<div class="abs" style="left:339.800px;top:15.0px;width:1px;height:91px;background:#e0565c"></div>
<svg class="abs" style="left:336px;top:9.7px" width="8.500" height="7" viewBox="0 0 17 14"><path d="M1 0h15a1 1 0 0 1 .8 1.600L9.300 13a1 1 0 0 1-1.600 0L0.200 1.600A1 1 0 0 1 1 0z" fill="#f0565c"/></svg>
<div class="abs" style="left:0;top:105.5px;width:825px;height:22px;background:#22242a"></div>
<div class="abs btn" style="left:2px;top:110.0px;width:29.500px;height:12.800px;background:#4b4e56"></div>
<span class="t" style="left:4.50px;top:111.80px;font-size:7.80px;font-weight:normal;color:#fff;transform:scaleX(0.883);">Add clip</span>
<div class="abs" style="left:780.800px;top:81.8px;width:34px;height:34px;border-radius:50%;background:#e0196b"><svg class="abs" style="left:9.200px;top:8.200px" width="15" height="18" viewBox="0 0 15 18"><path d="M2 0h11A2 2 0 0 1 15 2V18L11.500 15h-9.500A2 2 0 0 1 0 13V2A2 2 0 0 1 2 0z" fill="#fff"/><path d="M3 9.500c2.200 2 6.800 2 9 0" fill="none" stroke="#e0196b" stroke-width="1.200" stroke-linecap="round"/></svg></div>
<div class="abs" style="left:804.600px;top:80.8px;width:12px;height:12px;border-radius:50%;background:#d7282f"></div>
<span class="t" style="left:808.60px;top:82.50px;font-size:7.20px;font-weight:bold;color:#fff;transform:scaleX(1.000);">2</span>
</div>

</body></html>
